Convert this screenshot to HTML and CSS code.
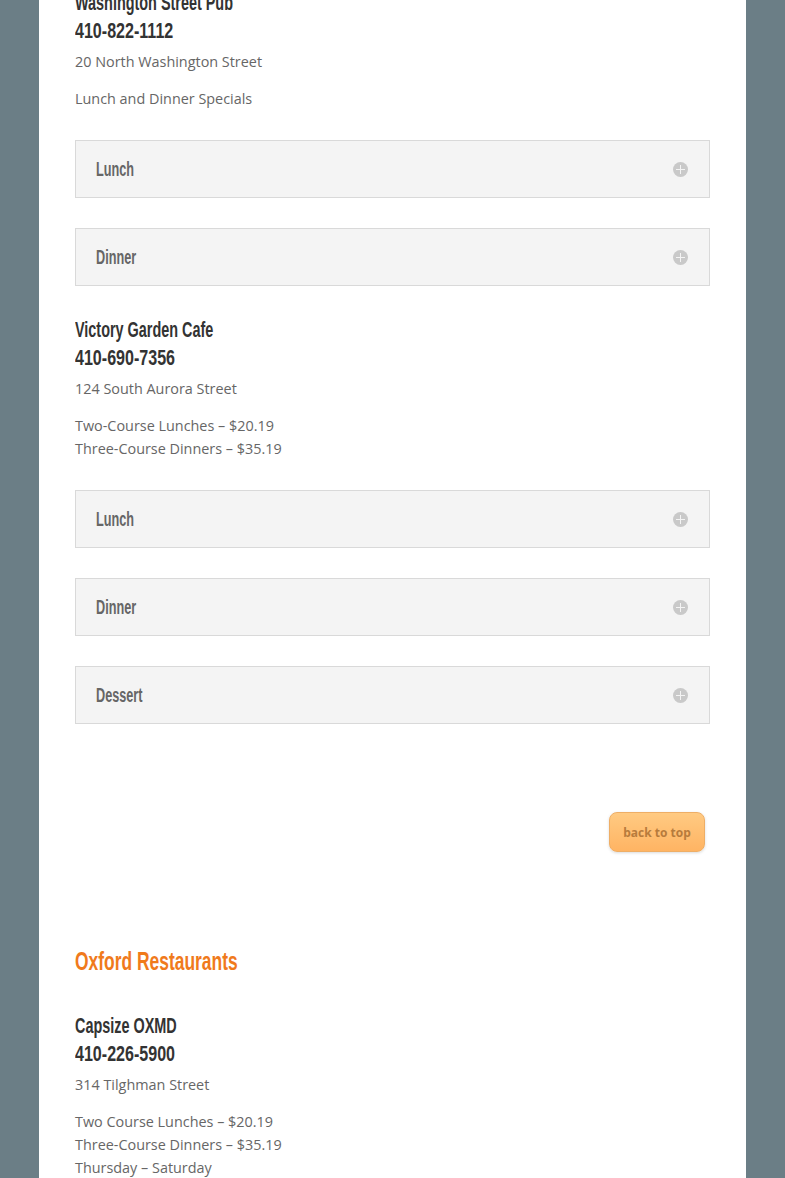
FILE: index.html
```html
<!DOCTYPE html>
<html lang="en">
<head>
    <meta charset="UTF-8">
    <meta name="viewport" content="width=device-width, initial-scale=1.0">
    <title>Restaurant Week Specials</title>
    <link rel="stylesheet" href="styles.css">
</head>
<body>
    <div class="page">
        <div class="content">
            <div class="listing first">
                <h3 class="listing-name">
                    <span class="name">Washington Street Pub</span>
                    <span class="phone">410-822-1112</span>
                </h3>
                <p>20 North Washington Street</p>
                <p class="last">Lunch and Dinner Specials</p>
                <div class="toggle"><h5>Lunch</h5><span class="toggle-icon"></span></div>
                <div class="toggle"><h5>Dinner</h5><span class="toggle-icon"></span></div>
            </div>

            <div class="listing">
                <h3 class="listing-name">
                    <span class="name">Victory Garden Cafe</span>
                    <span class="phone">410-690-7356</span>
                </h3>
                <p>124 South Aurora Street</p>
                <p class="last">Two-Course Lunches – $20.19<br>Three-Course Dinners – $35.19</p>
                <div class="toggle"><h5>Lunch</h5><span class="toggle-icon"></span></div>
                <div class="toggle"><h5>Dinner</h5><span class="toggle-icon"></span></div>
                <div class="toggle"><h5>Dessert</h5><span class="toggle-icon"></span></div>
            </div>

            <div class="back-row">
                <a href="#" class="back-top">back to top</a>
            </div>

            <h2 class="town">Oxford Restaurants</h2>

            <div class="listing">
                <h3 class="listing-name">
                    <span class="name">Capsize OXMD</span>
                    <span class="phone">410-226-5900</span>
                </h3>
                <p>314 Tilghman Street</p>
                <p class="last">Two Course Lunches – $20.19<br>Three-Course Dinners – $35.19<br>Thursday – Saturday</p>
            </div>
        </div>
    </div>
</body>
</html>
```

FILE: styles.css
```css
body {
    margin: 0;
    padding: 0;
    background-color: #6b7e86;
    font-family: "Open Sans", Arial, sans-serif;
    color: #666;
    font-size: 14.4px;
    overflow: hidden;
}
.page {
    width: 707px;
    margin-left: 39px;
    min-height: 1400px;
    background-color: #fff;
}
.content {
    padding: 0 36px;
    margin-top: -11px;
}
.listing {
    padding-top: 30px;
}
.listing.first {
    padding-top: 0;
}
/* narrow display face, squeezed from Liberation Sans */
.listing-name,
.toggle h5,
.town {
    font-family: "Liberation Sans", Arial, sans-serif;
}
.name,
.phone,
.toggle h5,
.town {
    transform-origin: 0 50%;
}
.listing-name {
    margin: 0;
    font-weight: bold;
    font-size: 22px;
    line-height: 28px;
    color: #333;
}
.name,
.phone {
    display: block;
    white-space: nowrap;
}
.name {
    transform: scaleX(0.655);
}
.phone {
    transform: scaleX(0.73);
}
.listing-name + p {
    margin-top: 4.5px;
}
p {
    margin: 0;
    line-height: 23px;
    padding-bottom: 14px;
}
p.last {
    padding-bottom: 30.5px;
}
.toggle {
    display: flex;
    justify-content: space-between;
    align-items: center;
    height: 56px;
    padding: 0 21px 0 20px;
    margin-bottom: 30px;
    background-color: #f4f4f4;
    border: 1px solid #d9d9d9;
}
.toggle:last-child {
    margin-bottom: 0;
}
.toggle h5 {
    margin: 0;
    font-weight: bold;
    font-size: 19.5px;
    color: #666;
    transform: scaleX(0.65);
}
.toggle-icon {
    position: relative;
    width: 15px;
    height: 15px;
    border-radius: 50%;
    background-color: #c9c9c9;
}
.toggle-icon::before,
.toggle-icon::after {
    content: '';
    position: absolute;
    background-color: #f4f4f4;
}
.toggle-icon::before {
    left: 3px;
    right: 3px;
    top: 7px;
    height: 1px;
}
.toggle-icon::after {
    top: 3px;
    bottom: 3px;
    left: 7px;
    width: 1px;
}
.back-row {
    display: flex;
    justify-content: flex-end;
    padding: 88px 5px 0 0;
}
.back-top {
    display: flex;
    align-items: center;
    justify-content: center;
    width: 94px;
    height: 38px;
    border: 1px solid #eeae66;
    border-radius: 8px;
    background: linear-gradient(to bottom, #ffca82, #ffb463);
    box-shadow: 0 1px 3px rgba(0, 0, 0, 0.15);
    color: #b77b3c;
    font-size: 12px;
    font-weight: bold;
    text-decoration: none;
}
.town {
    margin: 92px 0 4px 0;
    font-weight: bold;
    font-size: 26px;
    line-height: 34px;
    color: #f07a1c;
    transform: scaleX(0.67);
}
```
